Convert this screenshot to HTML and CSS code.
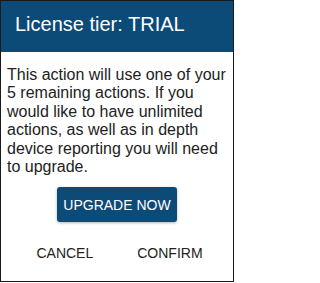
FILE: index.html
```html
<!DOCTYPE html>
<html>
<head>
<meta charset="utf-8">
<link rel="stylesheet" href="styles.css">
</head>
<body>
<div class="dialog">
  <div class="header">License tier: TRIAL</div>
  <p class="message">This action will use one of your 5 remaining actions. If you would like to have unlimited actions, as well as in depth device reporting you will need to upgrade.</p>
  <div class="upgrade-row">
    <button class="upgrade">UPGRADE NOW</button>
  </div>
  <div class="actions">
    <button class="text-btn">CANCEL</button>
    <button class="text-btn">CONFIRM</button>
  </div>
</div>
</body>
</html>
```
FILE: styles.css
```css
html, body {
  margin: 0;
  padding: 0;
  background: #ffffff;
}
body {
  font-family: "Liberation Sans", Arial, sans-serif;
  color: #222222;
}
.dialog {
  box-sizing: border-box;
  width: 234px;
  height: 282px;
  border: 1px solid #1a1a1a;
  display: flex;
  flex-direction: column;
}
.header {
  background: #0c4a78;
  color: #ffffff;
  font-size: 20px;
  line-height: 23px;
  height: 51px;
  box-sizing: border-box;
  padding: 12px 0 0 14px;
}
.message {
  margin: 14px 0 0 6px;
  font-size: 16px;
  line-height: 18.4px;
  color: #222222;
}
.upgrade-row {
  display: flex;
  justify-content: center;
  margin-top: 11px;
}
.upgrade {
  font-family: "Liberation Sans", Arial, sans-serif;
  font-size: 14px;
  color: #ffffff;
  background: #0c4a78;
  border: none;
  border-radius: 3px;
  width: 120px;
  height: 35px;
  padding: 0;
  box-shadow: 0 1px 3px rgba(0, 0, 0, 0.3);
}
.actions {
  display: flex;
  justify-content: center;
  gap: 44px;
  margin-top: 23px;
  padding-left: 5px;
}
.text-btn {
  font-family: "Liberation Sans", Arial, sans-serif;
  font-size: 14px;
  color: #222222;
  background: none;
  border: none;
  padding: 0;
  line-height: 16px;
}
```
